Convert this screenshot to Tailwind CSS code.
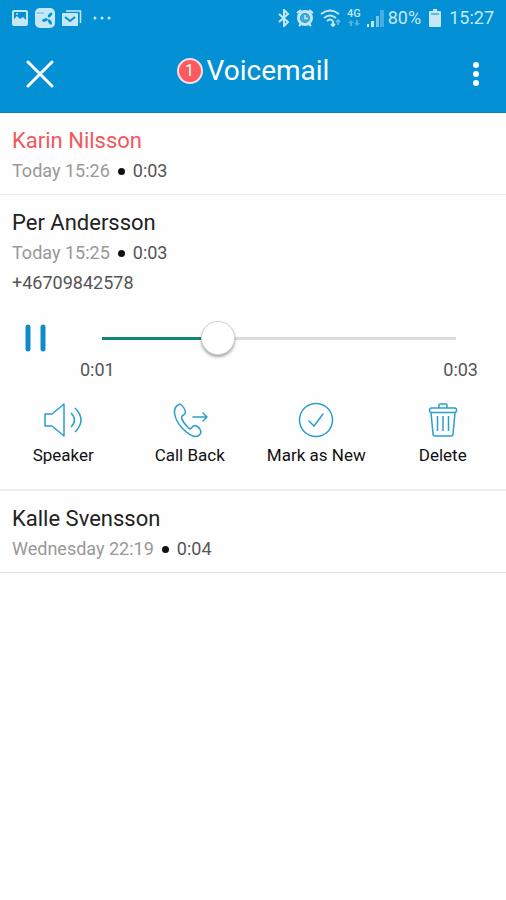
<!DOCTYPE html>
<html lang="en">
<head>
  <meta charset="UTF-8">
  <meta name="viewport" content="width=device-width, initial-scale=1.0">
  <title>Voicemail</title>
  <script src="https://cdn.jsdelivr.net/npm/@tailwindcss/browser@4"></script>
</head>
<body class="bg-[#fefefe] min-h-screen font-[Roboto,sans-serif] text-[#222]">
  <!-- Status bar -->
  <div class="bg-[#0390d4] h-9 px-3 flex items-center justify-between text-[#c5e8f8]">
    <div class="flex items-center gap-[7px]">
      <svg class="w-4 h-4" viewBox="0 0 16 16" fill="none" stroke="currentColor" stroke-width="2">
        <rect x="1" y="1" width="14" height="14" rx="1"/>
        <path d="M2 12V9l3-3 3 3 3-2 3 3v4H2z" fill="currentColor" stroke="none"/>
        <circle cx="5" cy="4" r="1" fill="currentColor" stroke="none"/>
      </svg>
      <svg class="w-5 h-5" viewBox="0 0 20 20">
        <rect width="20" height="20" rx="5" fill="currentColor"/>
        <path d="M2 5h7" stroke="#5fb4dd" stroke-width="1"/>
        <g fill="#0390d4">
          <ellipse cx="15" cy="7" rx="3" ry="1.5" transform="rotate(-48 15 7)"/>
          <ellipse cx="10" cy="12" rx="3" ry="1.5" transform="rotate(-15 10 12)"/>
          <ellipse cx="15" cy="14" rx="3" ry="1.5" transform="rotate(60 15 14)"/>
        </g>
      </svg>
      <svg class="w-5 h-4" viewBox="0 0 20 16" fill="none">
        <path d="M4 1h14.500v12" stroke="currentColor" stroke-width="1.500"/>
        <rect y="3" width="16" height="13" rx="1" fill="currentColor"/>
        <path d="M3 7l5 4 5-4" stroke="#0390d4" stroke-width="2"/>
      </svg>
      <svg class="w-5 h-1 ml-1" viewBox="0 0 20 4" fill="currentColor">
        <circle cx="2" cy="2" r="1.500"/><circle cx="9" cy="2" r="1.500"/><circle cx="16" cy="2" r="1.500"/>
      </svg>
    </div>
    <div class="flex items-center gap-1">
      <svg class="w-3 h-[18px] mr-0.5" viewBox="0 0 12 18" fill="none" stroke="currentColor" stroke-width="2">
        <path d="M1 5l9 8-4 4V1l4 4-9 8"/>
      </svg>
      <svg class="w-[18px] h-[18px] mr-0.5" viewBox="0 0 18 18">
        <path d="M1 4l4-3M17 4l-4-3M3 17l2-2M15 17l-2-2" stroke="currentColor" stroke-width="2"/>
        <circle cx="9" cy="9" r="6.500" fill="#0390d4" stroke="currentColor" stroke-width="3"/>
        <circle cx="9" cy="9" r="4.500" fill="#3fa9de"/>
        <path d="M9 6v3.500h3" fill="none" stroke="currentColor" stroke-width="1.500"/>
      </svg>
      <svg class="w-[22px] h-[18px]" viewBox="0 0 22 18" fill="none" stroke="currentColor" stroke-width="1.800">
        <path d="M1 5q9-7 18 0M4 9q6-5 12 0M7 12q3-3 6 0"/>
        <path d="M13 12v5m-2-2l2 2 2-2"/>
        <path d="M18 16v-5m-2 2l2-2 2 2" opacity=".5"/>
      </svg>
      <div class="w-4 flex flex-col items-center">
        <span class="text-[11px] leading-[10px] font-medium">4G</span>
        <svg class="w-3 h-2" viewBox="0 0 12 8" fill="currentColor" opacity=".4">
          <path d="M3 1l3 3H4v3H2V4H0zM9 7L6 4h2V1h2v3h2z"/>
        </svg>
      </div>
      <svg class="w-[18px] h-[18px]" viewBox="0 0 18 18" fill="currentColor">
        <path d="M1 15h2v3H1zM5 12h3v6H5z"/>
        <path d="M10 7h3v11h-3z" opacity=".6"/>
        <path d="M14 1h4v17h-4z" opacity=".35"/>
      </svg>
      <span class="text-lg leading-5">80%</span>
      <svg class="w-3 h-[18px] ml-1" viewBox="0 0 12 18" fill="currentColor">
        <path d="M4 0h4v2h3q1 0 1 1v14q0 1-1 1H1q-1 0-1-1V3q0-1 1-1h3z"/>
        <path d="M2 4h8v2H2z" fill="#0390d4" opacity=".5"/>
      </svg>
      <span class="text-lg leading-5 ml-1">15:27</span>
    </div>
  </div>

  <!-- Title bar -->
  <header class="bg-[#0390d4] h-[77px] px-6 border-b border-[#0a7fbb] flex items-center justify-between text-white">
    <button type="button" aria-label="Close" class="w-8 h-8 flex items-center justify-center">
      <svg class="w-7 h-7" viewBox="0 0 28 28" stroke="currentColor" stroke-width="3" stroke-linecap="round">
        <path d="M2 2l24 24M26 2L2 26"/>
      </svg>
    </button>
    <div class="flex items-center gap-1 pb-1.5">
      <span class="w-[26px] h-[26px] rounded-full border-2 border-[#f3dfe4] bg-[#fb5b5e] flex items-center justify-center text-base leading-4">1</span>
      <h1 class="text-[28px] leading-8">Voicemail</h1>
    </div>
    <button type="button" aria-label="More options" class="w-8 h-8 flex items-center justify-end">
      <svg class="w-4 h-6" viewBox="0 0 16 24" fill="currentColor">
        <circle cx="10" cy="3" r="3"/><circle cx="10" cy="12" r="3"/><circle cx="10" cy="21" r="3"/>
      </svg>
    </button>
  </header>

  <main>
    <section class="px-3 pt-[13px] pb-2 border-b border-[#ececec]">
      <h2 class="text-[22px] leading-[30px] text-[#f0595d]">Karin Nilsson</h2>
      <p class="flex items-center gap-2 text-lg leading-[30px] text-[#555]">
        <span class="text-[#999]">Today 15:26</span>
        <span class="w-[7px] h-[7px] rounded-full bg-[#111]"></span>
        <span>0:03</span>
      </p>
    </section>

    <section class="pt-[13px] pb-[22px] border-b-2 border-[#ececec]">
      <div class="px-3">
        <h2 class="text-[22px] leading-[30px]">Per Andersson</h2>
        <p class="flex items-center gap-2 text-lg leading-[30px] text-[#555]">
          <span class="text-[#999]">Today 15:25</span>
          <span class="w-[7px] h-[7px] rounded-full bg-[#111]"></span>
          <span>0:03</span>
        </p>
        <p class="text-lg leading-[30px] text-[#555]">+46709842578</p>
      </div>

      <!-- Player -->
      <div class="flex pl-6 pr-7 pt-5">
        <button type="button" aria-label="Pause" class="w-6 h-10 flex items-center justify-center">
          <svg class="w-6 h-7" viewBox="0 0 24 28" stroke="#0f8cc8" stroke-width="5" stroke-linecap="round">
            <path d="M4 3v22M19 3v22"/>
          </svg>
        </button>
        <div class="flex-1 ml-8">
          <div class="h-10 px-[22px] flex items-center">
            <input type="range" min="0" max="100" value="31" aria-label="Playback position"
                   class="w-full h-9 appearance-none bg-transparent [&::-webkit-slider-runnable-track]:h-[3px] [&::-webkit-slider-runnable-track]:bg-linear-to-r [&::-webkit-slider-runnable-track]:from-[#138672] [&::-webkit-slider-runnable-track]:from-33% [&::-webkit-slider-runnable-track]:to-[#dcdcdc] [&::-webkit-slider-runnable-track]:to-33% [&::-webkit-slider-thumb]:appearance-none [&::-webkit-slider-thumb]:w-[34px] [&::-webkit-slider-thumb]:h-[34px] [&::-webkit-slider-thumb]:-mt-4 [&::-webkit-slider-thumb]:rounded-full [&::-webkit-slider-thumb]:bg-white [&::-webkit-slider-thumb]:border [&::-webkit-slider-thumb]:border-[#d4d4d4] [&::-webkit-slider-thumb]:shadow-[0_2px_3px_rgba(0,0,0,0.35)]">
          </div>
          <div class="flex justify-between text-lg leading-6 text-[#555]">
            <span>0:01</span>
            <span>0:03</span>
          </div>
        </div>
      </div>

      <!-- Actions -->
      <div class="grid grid-cols-4 pt-5 text-[17px] leading-6 text-[#111]">
        <button type="button" class="flex flex-col items-center gap-[5px]">
          <svg class="w-10 h-9" viewBox="0 0 40 36" fill="none" stroke="#2b9fcb" stroke-width="1.500" stroke-linejoin="round">
            <path d="M2 12h7L21 2v32L9 24H2z"/>
            <path d="M28 11q7 7 0 14M32 6q12 12 0 24"/>
          </svg>
          <span>Speaker</span>
        </button>
        <button type="button" class="flex flex-col items-center gap-[5px]">
          <svg class="w-10 h-9" viewBox="0 0 40 36" fill="none" stroke="#2b9fcb" stroke-width="1.500" stroke-linejoin="round" stroke-linecap="round">
            <path d="M10 2Q4 4 4.500 11q1 8 8 15.500Q20 34 25 34.500q5 0 6-4.500-1-5-6-6.500-2 0-4 3-1 1-3-1-5-5-6.500-9.500 0-2 2-3 2-1 2-3-1-5-5.500-8z"/>
            <path d="M23 15h14M33 11l4 4-4 4"/>
          </svg>
          <span>Call Back</span>
        </button>
        <button type="button" class="flex flex-col items-center gap-[5px]">
          <svg class="w-9 h-9" viewBox="0 0 36 36" fill="none" stroke="#2b9fcb" stroke-width="1.500" stroke-linecap="round">
            <circle cx="18" cy="18" r="16.500"/>
            <path d="M11 19l5 5 9-12"/>
          </svg>
          <span>Mark as New</span>
        </button>
        <button type="button" class="flex flex-col items-center gap-[5px]">
          <svg class="w-9 h-9" viewBox="0 0 36 36" fill="none" stroke="#2b9fcb" stroke-width="1.500" stroke-linejoin="round">
            <path d="M14 6V3q0-1 1-1h6q1 0 1 1v3"/>
            <rect x="4.500" y="6" width="27" height="4.500" rx="2"/>
            <path d="M6 10.500l2 21.500q0 2 2 2h16q2 0 2-2l2-21.500"/>
            <path d="M12.500 14v15M18 14v15M23.500 14v15"/>
          </svg>
          <span>Delete</span>
        </button>
      </div>
    </section>

    <section class="px-3 pt-[13px] pb-2 border-b border-[#e4e4e4]">
      <h2 class="text-[22px] leading-[30px]">Kalle Svensson</h2>
      <p class="flex items-center gap-2 text-lg leading-[30px] text-[#555]">
        <span class="text-[#999]">Wednesday 22:19</span>
        <span class="w-[7px] h-[7px] rounded-full bg-[#111]"></span>
        <span>0:04</span>
      </p>
    </section>
  </main>
</body>
</html>
